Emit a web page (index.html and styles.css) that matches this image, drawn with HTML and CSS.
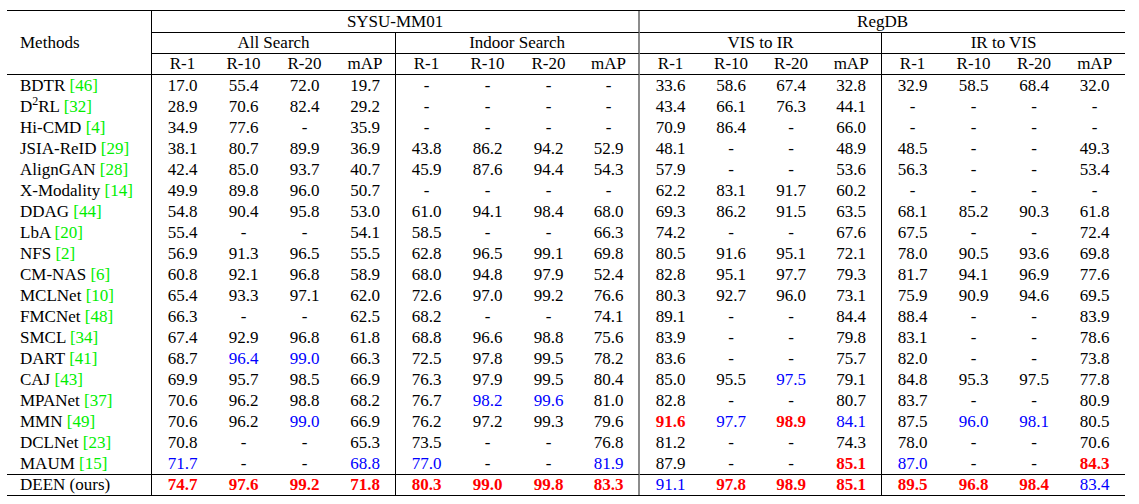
FILE: index.html
```html
<!DOCTYPE html>
<html>
<head>
<meta charset="utf-8">
<link rel="stylesheet" href="styles.css">
</head>
<body>
<div class="wrap">
<table class="res">
<colgroup>
<col class="cm">
<col class="c61"><col class="c61"><col class="c61"><col class="c61">
<col class="c61"><col class="c61"><col class="c61"><col class="c61">
<col class="c61"><col class="c60"><col class="c60"><col class="c61">
<col class="c61"><col class="c61"><col class="c60"><col class="c61">
</colgroup>
<thead>
<tr class="h1">
<th rowspan="3" class="meth">Methods</th>
<th colspan="8" class="bb gr">SYSU-MM01</th>
<th colspan="8" class="bb">RegDB</th>
</tr>
<tr class="h2">
<th colspan="4" class="bb vr">All Search</th>
<th colspan="4" class="bb gr">Indoor Search</th>
<th colspan="4" class="bb vr">VIS to IR</th>
<th colspan="4" class="bb">IR to VIS</th>
</tr>
<tr class="h3">
<th class="bb">R-1</th><th class="bb">R-10</th><th class="bb">R-20</th><th class="bb vr">mAP</th>
<th class="bb">R-1</th><th class="bb">R-10</th><th class="bb">R-20</th><th class="bb gr">mAP</th>
<th class="bb">R-1</th><th class="bb">R-10</th><th class="bb">R-20</th><th class="bb vr">mAP</th>
<th class="bb">R-1</th><th class="bb">R-10</th><th class="bb">R-20</th><th class="bb">mAP</th>
</tr>
</thead>
<tbody>
<tr><td class="name">BDTR <span class="c">[46]</span></td><td>17.0</td><td>55.4</td><td>72.0</td><td class="vr">19.7</td><td>-</td><td>-</td><td>-</td><td class="gr">-</td><td>33.6</td><td>58.6</td><td>67.4</td><td class="vr">32.8</td><td>32.9</td><td>58.5</td><td>68.4</td><td>32.0</td></tr>
<tr><td class="name">D<sup>2</sup>RL <span class="c">[32]</span></td><td>28.9</td><td>70.6</td><td>82.4</td><td class="vr">29.2</td><td>-</td><td>-</td><td>-</td><td class="gr">-</td><td>43.4</td><td>66.1</td><td>76.3</td><td class="vr">44.1</td><td>-</td><td>-</td><td>-</td><td>-</td></tr>
<tr><td class="name">Hi-CMD <span class="c">[4]</span></td><td>34.9</td><td>77.6</td><td>-</td><td class="vr">35.9</td><td>-</td><td>-</td><td>-</td><td class="gr">-</td><td>70.9</td><td>86.4</td><td>-</td><td class="vr">66.0</td><td>-</td><td>-</td><td>-</td><td>-</td></tr>
<tr><td class="name">JSIA-ReID <span class="c">[29]</span></td><td>38.1</td><td>80.7</td><td>89.9</td><td class="vr">36.9</td><td>43.8</td><td>86.2</td><td>94.2</td><td class="gr">52.9</td><td>48.1</td><td>-</td><td>-</td><td class="vr">48.9</td><td>48.5</td><td>-</td><td>-</td><td>49.3</td></tr>
<tr><td class="name">AlignGAN <span class="c">[28]</span></td><td>42.4</td><td>85.0</td><td>93.7</td><td class="vr">40.7</td><td>45.9</td><td>87.6</td><td>94.4</td><td class="gr">54.3</td><td>57.9</td><td>-</td><td>-</td><td class="vr">53.6</td><td>56.3</td><td>-</td><td>-</td><td>53.4</td></tr>
<tr><td class="name">X-Modality <span class="c">[14]</span></td><td>49.9</td><td>89.8</td><td>96.0</td><td class="vr">50.7</td><td>-</td><td>-</td><td>-</td><td class="gr">-</td><td>62.2</td><td>83.1</td><td>91.7</td><td class="vr">60.2</td><td>-</td><td>-</td><td>-</td><td>-</td></tr>
<tr><td class="name">DDAG <span class="c">[44]</span></td><td>54.8</td><td>90.4</td><td>95.8</td><td class="vr">53.0</td><td>61.0</td><td>94.1</td><td>98.4</td><td class="gr">68.0</td><td>69.3</td><td>86.2</td><td>91.5</td><td class="vr">63.5</td><td>68.1</td><td>85.2</td><td>90.3</td><td>61.8</td></tr>
<tr><td class="name">LbA <span class="c">[20]</span></td><td>55.4</td><td>-</td><td>-</td><td class="vr">54.1</td><td>58.5</td><td>-</td><td>-</td><td class="gr">66.3</td><td>74.2</td><td>-</td><td>-</td><td class="vr">67.6</td><td>67.5</td><td>-</td><td>-</td><td>72.4</td></tr>
<tr><td class="name">NFS <span class="c">[2]</span></td><td>56.9</td><td>91.3</td><td>96.5</td><td class="vr">55.5</td><td>62.8</td><td>96.5</td><td>99.1</td><td class="gr">69.8</td><td>80.5</td><td>91.6</td><td>95.1</td><td class="vr">72.1</td><td>78.0</td><td>90.5</td><td>93.6</td><td>69.8</td></tr>
<tr><td class="name">CM-NAS <span class="c">[6]</span></td><td>60.8</td><td>92.1</td><td>96.8</td><td class="vr">58.9</td><td>68.0</td><td>94.8</td><td>97.9</td><td class="gr">52.4</td><td>82.8</td><td>95.1</td><td>97.7</td><td class="vr">79.3</td><td>81.7</td><td>94.1</td><td>96.9</td><td>77.6</td></tr>
<tr><td class="name">MCLNet <span class="c">[10]</span></td><td>65.4</td><td>93.3</td><td>97.1</td><td class="vr">62.0</td><td>72.6</td><td>97.0</td><td>99.2</td><td class="gr">76.6</td><td>80.3</td><td>92.7</td><td>96.0</td><td class="vr">73.1</td><td>75.9</td><td>90.9</td><td>94.6</td><td>69.5</td></tr>
<tr><td class="name">FMCNet <span class="c">[48]</span></td><td>66.3</td><td>-</td><td>-</td><td class="vr">62.5</td><td>68.2</td><td>-</td><td>-</td><td class="gr">74.1</td><td>89.1</td><td>-</td><td>-</td><td class="vr">84.4</td><td>88.4</td><td>-</td><td>-</td><td>83.9</td></tr>
<tr><td class="name">SMCL <span class="c">[34]</span></td><td>67.4</td><td>92.9</td><td>96.8</td><td class="vr">61.8</td><td>68.8</td><td>96.6</td><td>98.8</td><td class="gr">75.6</td><td>83.9</td><td>-</td><td>-</td><td class="vr">79.8</td><td>83.1</td><td>-</td><td>-</td><td>78.6</td></tr>
<tr><td class="name">DART <span class="c">[41]</span></td><td>68.7</td><td class="b">96.4</td><td class="b">99.0</td><td class="vr">66.3</td><td>72.5</td><td>97.8</td><td>99.5</td><td class="gr">78.2</td><td>83.6</td><td>-</td><td>-</td><td class="vr">75.7</td><td>82.0</td><td>-</td><td>-</td><td>73.8</td></tr>
<tr><td class="name">CAJ <span class="c">[43]</span></td><td>69.9</td><td>95.7</td><td>98.5</td><td class="vr">66.9</td><td>76.3</td><td>97.9</td><td>99.5</td><td class="gr">80.4</td><td>85.0</td><td>95.5</td><td class="b">97.5</td><td class="vr">79.1</td><td>84.8</td><td>95.3</td><td>97.5</td><td>77.8</td></tr>
<tr><td class="name">MPANet <span class="c">[37]</span></td><td>70.6</td><td>96.2</td><td>98.8</td><td class="vr">68.2</td><td>76.7</td><td class="b">98.2</td><td class="b">99.6</td><td class="gr">81.0</td><td>82.8</td><td>-</td><td>-</td><td class="vr">80.7</td><td>83.7</td><td>-</td><td>-</td><td>80.9</td></tr>
<tr><td class="name">MMN <span class="c">[49]</span></td><td>70.6</td><td>96.2</td><td class="b">99.0</td><td class="vr">66.9</td><td>76.2</td><td>97.2</td><td>99.3</td><td class="gr">79.6</td><td class="r">91.6</td><td class="b">97.7</td><td class="r">98.9</td><td class="vr b">84.1</td><td>87.5</td><td class="b">96.0</td><td class="b">98.1</td><td>80.5</td></tr>
<tr><td class="name">DCLNet <span class="c">[23]</span></td><td>70.8</td><td>-</td><td>-</td><td class="vr">65.3</td><td>73.5</td><td>-</td><td>-</td><td class="gr">76.8</td><td>81.2</td><td>-</td><td>-</td><td class="vr">74.3</td><td>78.0</td><td>-</td><td>-</td><td>70.6</td></tr>
<tr><td class="name">MAUM <span class="c">[15]</span></td><td class="b">71.7</td><td>-</td><td>-</td><td class="vr b">68.8</td><td class="b">77.0</td><td>-</td><td>-</td><td class="gr b">81.9</td><td>87.9</td><td>-</td><td>-</td><td class="vr r">85.1</td><td class="b">87.0</td><td>-</td><td>-</td><td class="r">84.3</td></tr>
<tr class="ours"><td class="name">DEEN (ours)</td><td class="r">74.7</td><td class="r">97.6</td><td class="r">99.2</td><td class="vr r">71.8</td><td class="r">80.3</td><td class="r">99.0</td><td class="r">99.8</td><td class="gr r">83.3</td><td class="b">91.1</td><td class="r">97.8</td><td class="r">98.9</td><td class="vr r">85.1</td><td class="r">89.5</td><td class="r">96.8</td><td class="r">98.4</td><td class="b">83.4</td></tr>
</tbody>
</table>
</div>
</body>
</html>
```

FILE: styles.css
```css
html, body {
  margin: 0;
  padding: 0;
  background: #ffffff;
}
.wrap {
  padding: 10px 0 0 7px;
}
.res {
  border-collapse: separate;
  border-spacing: 0;
  table-layout: fixed;
  width: 1118px;
  border-top: 1px solid #000;
  border-bottom: 1px solid #000;
  font-family: "Liberation Serif", "Times New Roman", serif;
  font-size: 17px;
  color: #000;
}
.cm { width: 145px; }
.c61 { width: 61px; }
.c60 { width: 60px; }
.res th, .res td {
  padding: 0;
  text-align: center;
  font-weight: normal;
  white-space: nowrap;
  line-height: 21px;
}
.h1 th { line-height: 21px; }
.h2 th, .h3 th { line-height: 20px; }
.res th.meth {
  text-align: left;
  padding-left: 13px;
  border-right: 1px solid #000;
  border-bottom: 1px solid #000;
  vertical-align: middle;
}
.res td.name {
  text-align: left;
  padding-left: 13px;
  border-right: 1px solid #000;
}
.bb { border-bottom: 1px solid #000; }
.vr { border-right: 1px solid #000; }
.gr { border-right: 2px solid #8c8c8c; }
.c { color: #00ee00; }
.b { color: #0000ff; }
.r { color: #ff0000; font-weight: bold; }
.res td.r { font-weight: bold; }
sup {
  font-size: 12px;
  line-height: 0;
  vertical-align: 7px;
}
.ours td {
  border-top: 1px solid #000;
  line-height: 20px;
}
```
